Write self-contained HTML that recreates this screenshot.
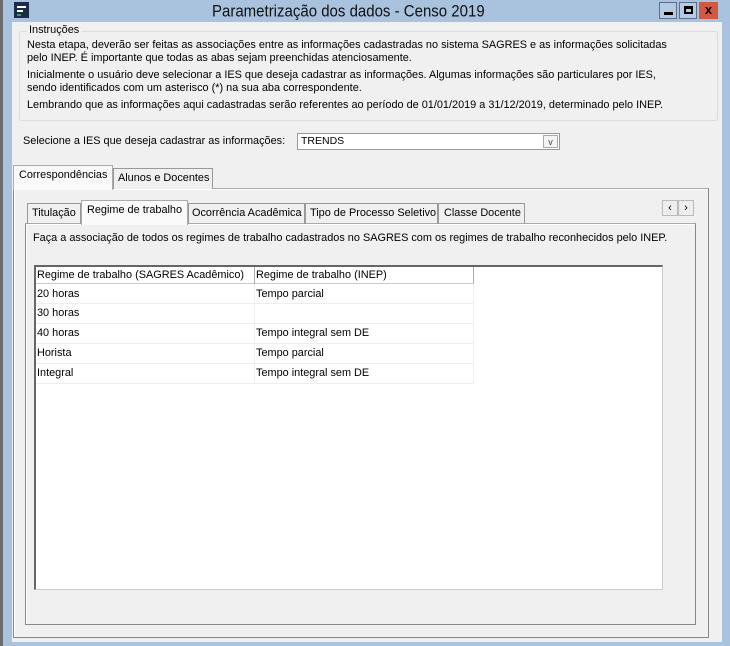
<!DOCTYPE html>
<html><head><meta charset="utf-8"><style>
*{box-sizing:border-box;margin:0;padding:0}
body{width:730px;height:646px;overflow:hidden;background:#a9c3df;font-family:"Liberation Sans",Tahoma,sans-serif;font-size:10.9px;color:#000;position:relative}
.abs{position:absolute}
.t{position:absolute;white-space:nowrap}
</style></head><body>
<div class="abs" style="left:0;top:0;width:3px;height:646px;background:#6b6b6b"></div>
<div class="abs" style="left:12px;top:22px;width:710px;height:620px;background:#f0f0f0"></div>
<!-- title -->
<div class="abs" style="left:14px;top:2px;width:15px;height:16px;background:#1b2c4a"></div>
<div class="abs" style="left:17px;top:6px;width:9px;height:2px;background:#fff"></div>
<div class="abs" style="left:17px;top:10px;width:6px;height:2px;background:#fff"></div>
<div class="abs" style="left:17px;top:14px;width:4px;height:2px;background:#3a9a5a"></div>
<div class="t" style="left:212px;top:2px;font-size:15px;color:#111;transform:scaleY(1.1);transform-origin:left top">Parametrização dos dados - Censo 2019</div>
<div class="abs" style="left:659px;top:2px;width:18px;height:17px;border:1px solid #5a6f8a;background:#b5cbe3"><div class="abs" style="left:4px;top:9px;width:9px;height:3px;background:#000"></div></div>
<div class="abs" style="left:679px;top:2px;width:18px;height:17px;border:1px solid #5a6f8a;background:#b5cbe3"><div class="abs" style="left:4px;top:3px;width:9px;height:8px;border:2px solid #000;border-top-width:3px"></div></div>
<div class="abs" style="left:699px;top:2px;width:19px;height:17px;background:#d4573f;color:#000;font-weight:bold;font-size:13px;text-align:center;line-height:16px">x</div>
<!-- instrucoes -->
<div class="abs" style="left:19px;top:31px;width:699px;height:90px;border:1px solid #dcdcdc;border-radius:3px"></div>
<div class="t" style="left:27px;top:24px;background:#f0f0f0;padding:0 2px">Instruções</div>
<div class="t" style="left:27px;top:39px;line-height:13px">Nesta etapa, deverão ser feitas as associações entre as informações cadastradas no sistema SAGRES e as informações solicitadas<br>pelo INEP. É importante que todas as abas sejam preenchidas atenciosamente.</div>
<div class="t" style="left:27px;top:69px;line-height:13px">Inicialmente o usuário deve selecionar a IES que deseja cadastrar as informações. Algumas informações são particulares por IES,<br>sendo identificados com um asterisco (*) na sua aba correspondente.</div>
<div class="t" style="left:27px;top:99px">Lembrando que as informações aqui cadastradas serão referentes ao período de 01/01/2019 a 31/12/2019, determinado pelo INEP.</div>
<div class="t" style="left:23px;top:135px">Selecione a IES que deseja cadastrar as informações:</div>
<div class="abs" style="left:297px;top:133px;width:263px;height:17px;border:1px solid #999;background:#fff"><span class="t" style="left:3px;top:1px;font-size:10.5px">TRENDS</span><div class="abs" style="right:1px;top:1px;width:15px;height:13px;border:1px solid #aaa;background:#f4f4f4;font-size:9px;text-align:center;line-height:12px;color:#444">v</div></div>
<!-- outer tabs -->
<div class="abs" style="left:13px;top:188px;width:696px;height:450px;border:1px solid #888;border-top-color:#aaa;background:#f0f0f0;box-shadow:inset 1px 1px 0 #fff"></div>
<div class="abs" style="left:113px;top:168px;width:100px;height:21px;border:1px solid #999;border-bottom:none;background:#f0f0f0"></div>
<div class="t" style="left:118px;top:172px">Alunos e Docentes</div>
<div class="abs" style="left:13px;top:165px;width:100px;height:25px;border:1px solid #aaa;border-bottom:none;background:#fafafa"></div>
<div class="t" style="left:19px;top:169px">Correspondências</div>
<!-- inner tabs -->
<div class="abs" style="left:25px;top:223px;width:671px;height:402px;border:1px solid #888;border-top-color:#aaa;background:#f0f0f0;box-shadow:inset 1px 1px 0 #fff"></div>
<div class="abs" style="left:27px;top:203px;width:54px;height:21px;border:1px solid #999;border-bottom:none"></div><div class="t" style="left:32px;top:207px">Titulação</div>
<div class="abs" style="left:188px;top:203px;width:117px;height:21px;border:1px solid #999;border-bottom:none"></div><div class="t" style="left:192px;top:207px">Ocorrência Acadêmica</div>
<div class="abs" style="left:305px;top:203px;width:133px;height:21px;border:1px solid #999;border-bottom:none"></div><div class="t" style="left:310px;top:207px">Tipo de Processo Seletivo</div>
<div class="abs" style="left:438px;top:203px;width:87px;height:21px;border:1px solid #999;border-bottom:none"></div><div class="t" style="left:444px;top:207px">Classe Docente</div>
<div class="abs" style="left:81px;top:200px;width:107px;height:25px;border:1px solid #aaa;border-bottom:none;background:#fafafa"></div><div class="t" style="left:87px;top:204px">Regime de trabalho</div>
<div class="abs" style="left:662px;top:200px;width:16px;height:16px;border:1px solid #bbb;background:#eee;text-align:center;font-size:11px;line-height:14px">‹</div>
<div class="abs" style="left:678px;top:200px;width:16px;height:16px;border:1px solid #bbb;background:#eee;text-align:center;font-size:11px;line-height:14px">›</div>
<div class="t" style="left:33px;top:232px">Faça a associação de todos os regimes de trabalho cadastrados no SAGRES com os regimes de trabalho reconhecidos pelo INEP.</div>
<!-- table -->
<div class="abs" style="left:34px;top:265px;width:629px;height:325px;background:#fff;border:1px solid #ccc;border-left:2px solid #666;border-top:2px solid #666"></div>
<div class="abs" style="left:36px;top:267px;width:438px;height:17px;border-bottom:1px solid #ccc;border-right:1px solid #aaa"></div>
<div class="abs" style="left:254px;top:267px;width:1px;height:17px;background:#aaa"></div>
<div class="t" style="left:37px;top:269px">Regime de trabalho (SAGRES Acadêmico)</div>
<div class="t" style="left:256px;top:269px">Regime de trabalho (INEP)</div>
<div class="abs" style="left:36px;top:303px;width:438px;height:1px;background:#eee"></div>
<div class="abs" style="left:36px;top:323px;width:438px;height:1px;background:#eee"></div>
<div class="abs" style="left:36px;top:343px;width:438px;height:1px;background:#eee"></div>
<div class="abs" style="left:36px;top:363px;width:438px;height:1px;background:#eee"></div>
<div class="abs" style="left:36px;top:383px;width:438px;height:1px;background:#eee"></div>
<div class="abs" style="left:254px;top:284px;width:1px;height:100px;background:#eee"></div>
<div class="abs" style="left:473px;top:284px;width:1px;height:100px;background:#eee"></div>
<div class="t" style="left:37px;top:288px">20 horas</div><div class="t" style="left:256px;top:288px">Tempo parcial</div>
<div class="t" style="left:37px;top:307px">30 horas</div>
<div class="t" style="left:37px;top:327px">40 horas</div><div class="t" style="left:256px;top:327px">Tempo integral sem DE</div>
<div class="t" style="left:37px;top:347px">Horista</div><div class="t" style="left:256px;top:347px">Tempo parcial</div>
<div class="t" style="left:37px;top:367px">Integral</div><div class="t" style="left:256px;top:367px">Tempo integral sem DE</div>
</body></html>
